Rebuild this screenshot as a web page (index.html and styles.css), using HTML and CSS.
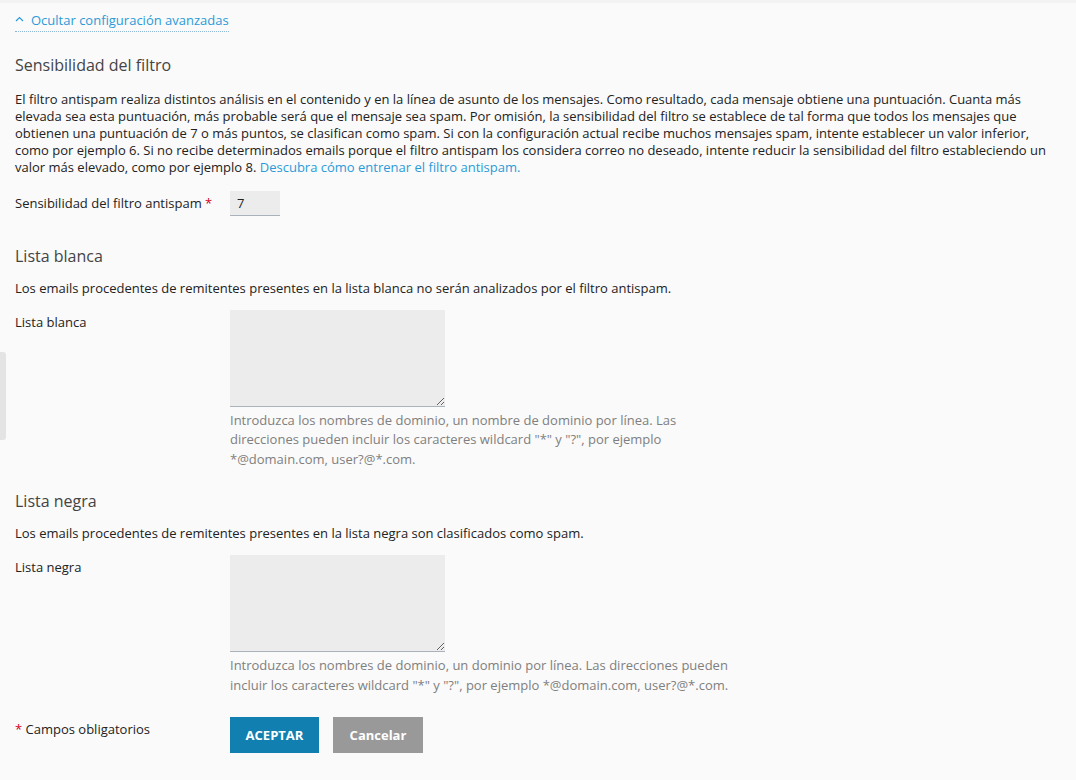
FILE: index.html
```html
<!DOCTYPE html>
<html lang="es">
<head>
  <meta charset="UTF-8" />
  <title>Configuración del filtro antispam</title>
  <link rel="stylesheet" href="styles.css">
</head>
<body>
  <div class="side-tab"></div>

  <div class="toggle-row">
    <a class="toggle" href="#">
      <svg class="chevron" width="9" height="6" viewBox="0 0 9 6"><path d="M1 5 L4.5 1.5 L8 5" fill="none" stroke="#2b9ad8" stroke-width="1.2"/></svg>
      <span>Ocultar configuración avanzadas</span>
    </a>
  </div>

  <section class="block first">
    <h3>Sensibilidad del filtro</h3>
    <p>El filtro antispam realiza distintos análisis en el contenido y en la línea de asunto de los mensajes. Como resultado, cada mensaje obtiene una puntuación. Cuanta más elevada sea esta puntuación, más probable será que el mensaje sea spam. Por omisión, la sensibilidad del filtro se establece de tal forma que todos los mensajes que obtienen una puntuación de 7 o más puntos, se clasifican como spam. Si con la configuración actual recibe muchos mensajes spam, intente establecer un valor inferior, como por ejemplo 6. Si no recibe determinados emails porque el filtro antispam los considera correo no deseado, intente reducir la sensibilidad del filtro estableciendo un valor más elevado, como por ejemplo 8. <a href="#">Descubra cómo entrenar el filtro antispam.</a></p>
    <div class="form-row center">
      <label class="field-label">Sensibilidad del filtro antispam <span class="req">*</span></label>
      <div class="field"><input class="num" type="text" value="7"></div>
    </div>
  </section>

  <section class="block second">
    <h3>Lista blanca</h3>
    <p>Los emails procedentes de remitentes presentes en la lista blanca no serán analizados por el filtro antispam.</p>
    <div class="form-row">
      <label class="field-label top">Lista blanca</label>
      <div class="field">
        <textarea></textarea>
        <div class="hint">Introduzca los nombres de dominio, un nombre de dominio por línea. Las direcciones pueden incluir los caracteres wildcard "*" y "?", por ejemplo *@domain.com, user?@*.com.</div>
      </div>
    </div>
  </section>

  <section class="block third">
    <h3>Lista negra</h3>
    <p>Los emails procedentes de remitentes presentes en la lista negra son clasificados como spam.</p>
    <div class="form-row">
      <label class="field-label top">Lista negra</label>
      <div class="field">
        <textarea></textarea>
        <div class="hint">Introduzca los nombres de dominio, un dominio por línea. Las direcciones pueden incluir los caracteres wildcard "*" y "?", por ejemplo *@domain.com, user?@*.com.</div>
      </div>
    </div>
  </section>

  <div class="form-row actions">
    <div class="field-label"><span class="req">*</span> Campos obligatorios</div>
    <div class="buttons">
      <button class="btn primary">ACEPTAR</button>
      <button class="btn secondary">Cancelar</button>
    </div>
  </div>
</body>
</html>
```

FILE: styles.css
```css
body {
  margin: 0;
  padding: 0 15px;
  background: #fafafa;
  border-top: 3px solid #f3f3f3;
  font-family: "Open Sans", sans-serif;
  font-size: 13px;
  line-height: 17px;
  color: #222;
}
a {
  color: #2b9ad8;
  text-decoration: none;
}
.side-tab {
  position: absolute;
  left: 0;
  top: 352px;
  width: 6px;
  height: 88px;
  background: #e4e4e4;
  border-radius: 0 3px 3px 0;
}
.toggle-row {
  padding-top: 6px;
}
.toggle {
  display: inline-flex;
  align-items: center;
  gap: 7px;
  border-bottom: 1px dotted #8fb8d8;
  padding-bottom: 2px;
}
.chevron {
  margin-top: -2px;
}
.block h3 {
  margin: 0 0 13px;
  font-size: 16px;
  font-weight: normal;
  line-height: 22px;
  color: #444;
}
.block p {
  margin: 0 0 13px;
}
.block.first {
  margin-top: 22px;
}
.block.first h3 {
  margin-bottom: 15px;
}
.block.first p {
  margin-bottom: 15px;
}
.block.second {
  margin-top: 29px;
}
.block.third {
  margin-top: 21px;
}
.form-row {
  display: flex;
}
.form-row.center {
  align-items: center;
}
.field-label {
  width: 215px;
  flex-shrink: 0;
}
.field-label.top {
  padding-top: 4px;
}
.req {
  color: #d0021b;
}
.num {
  width: 50px;
  height: 25px;
  box-sizing: border-box;
  border: none;
  border-bottom: 1px solid #aab3bc;
  background: #ececec;
  padding: 0 7px;
  font: inherit;
  color: #222;
}
textarea {
  display: block;
  width: 215px;
  height: 97px;
  box-sizing: border-box;
  margin: 0;
  border: none;
  border-bottom: 1px solid #aab3bc;
  background: #ececec;
  font: inherit;
}
.hint {
  max-width: 510px;
  margin-top: 4px;
  line-height: 19.5px;
  color: #7f7f7f;
}
.actions {
  margin-top: 22px;
  align-items: flex-start;
}
.actions .field-label {
  padding-top: 4px;
}
.buttons {
  display: flex;
  gap: 14px;
}
.btn {
  height: 36px;
  border: none;
  font-family: "Open Sans", sans-serif;
  font-size: 13px;
  font-weight: bold;
  color: #fff;
  cursor: pointer;
}
.primary {
  width: 89px;
  background: #117fb0;
}
.secondary {
  width: 90px;
  background: #999;
}
```
